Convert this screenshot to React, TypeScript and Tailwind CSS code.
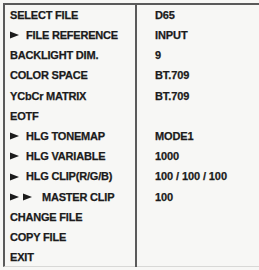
import React from "react";

// Setup menu from a monitor OSD: labels on the left, current values on the right.
type Row = { label: string; value?: string; arrows?: number };

const rows: Row[] = [
  { label: "SELECT FILE", value: "D65" },
  { label: "FILE REFERENCE", value: "INPUT", arrows: 1 },
  { label: "BACKLIGHT DIM.", value: "9" },
  { label: "COLOR SPACE", value: "BT.709" },
  { label: "YCbCr MATRIX", value: "BT.709" },
  { label: "EOTF" },
  { label: "HLG TONEMAP", value: "MODE1", arrows: 1 },
  { label: "HLG VARIABLE", value: "1000", arrows: 1 },
  { label: "HLG CLIP(R/G/B)", value: "100 / 100 / 100", arrows: 1 },
  { label: "MASTER CLIP", value: "100", arrows: 2 },
  { label: "CHANGE FILE" },
  { label: "COPY FILE" },
  { label: "EXIT" },
];

function Arrow() {
  return (
    <svg width="9" height="8" viewBox="0 0 9 8" className="shrink-0">
      <path d="M0 0.5 L9 4 L0 7.5 Z" fill="#1b1b1b" />
    </svg>
  );
}

export default function App() {
  return (
    <div
      className="h-[270px] w-[259px] overflow-hidden bg-[#f7f7f5] pl-[3px] pt-[3px] text-[#1b1b1b]"
      style={{ fontFamily: '"Liberation Sans", Arial, sans-serif' }}
    >
      <div className="h-[264px] border-l-2 border-t-2 border-b border-[#5a5a5a] border-b-[#d8d8d6]">
        {rows.map((row) => (
          <div key={row.label} className="flex h-[20.2px] items-center">
            <div className="flex h-full w-[132px] items-center border-r-2 border-[#5a5a5a] pl-[5px] text-[11px] font-bold tracking-[-0.2px] [-webkit-text-stroke:0.25px_#1b1b1b]">
              {row.arrows === 1 && (
                <span className="flex w-[16px] items-center">
                  <Arrow />
                </span>
              )}
              {row.arrows === 2 && (
                <span className="flex w-[32px] items-center gap-[4px]">
                  <Arrow />
                  <Arrow />
                </span>
              )}
              <span className="whitespace-nowrap">{row.label}</span>
            </div>
            <div className="pl-[18px] text-[11px] font-bold tracking-[-0.1px] whitespace-nowrap [-webkit-text-stroke:0.25px_#1b1b1b]">
              {row.value}
            </div>
          </div>
        ))}
      </div>
    </div>
  );
}
